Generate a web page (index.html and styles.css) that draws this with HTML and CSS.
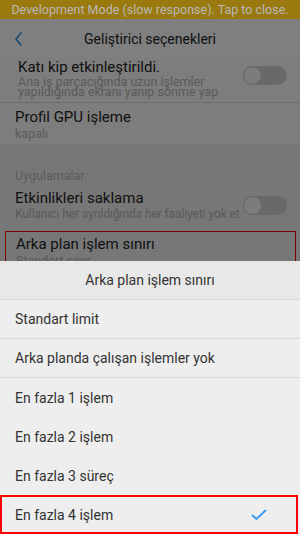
FILE: index.html
```html
<!doctype html>
<html>
<head>
<meta charset="utf-8">
<link rel="stylesheet" href="styles.css">
<title>Geliştirici seçenekleri</title>
</head>
<body>
<div class="devbar">Development Mode (slow response). Tap to close.</div>

<div class="screen">
    <header class="appbar">
        <svg class="back" width="10" height="16" viewBox="0 0 10 16">
            <path d="M7.5 1.5 L2 8 L7.5 14.5" fill="none" stroke="#2f93e6" stroke-width="1.6"/>
        </svg>
        <h1>Geliştirici seçenekleri</h1>
    </header>

    <div class="list">
        <div class="row row-first">
            <div class="text">
                <div class="title">Katı kip etkinleştirildi.</div>
                <div class="sub sub-tight">Ana iş parçacığında uzun işlemler<br>yapıldığında ekranı yanıp sönme yap</div>
            </div>
            <span class="toggle"></span>
        </div>
        <div class="row row-gpu">
            <div class="text">
                <div class="title">Profil GPU işleme</div>
                <div class="sub">kapalı</div>
            </div>
        </div>
    </div>

    <div class="group">
        <div class="group-label">Uygulamalar</div>
        <div class="row row-plain">
            <div class="text">
                <div class="title">Etkinlikleri saklama</div>
                <div class="sub">Kullanıcı her ayrıldığında her faaliyeti yok et</div>
            </div>
            <span class="toggle"></span>
        </div>
        <div class="row row-marked">
            <div class="text">
                <div class="title">Arka plan işlem sınırı</div>
                <div class="sub">Standart sınır</div>
            </div>
        </div>
    </div>

    <div class="scrim"></div>

    <div class="sheet">
        <div class="sheet-title">Arka plan işlem sınırı</div>
        <div class="option line">Standart limit</div>
        <div class="option line">Arka planda çalışan işlemler yok</div>
        <div class="option">En fazla 1 işlem</div>
        <div class="option">En fazla 2 işlem</div>
        <div class="option">En fazla 3 süreç</div>
        <div class="option selected">
            En fazla 4 işlem
            <svg class="check" width="18" height="13" viewBox="0 0 18 13">
                <path d="M2 7 L6.5 11 L16 2" fill="none" stroke="#3a9cf2" stroke-width="2"/>
            </svg>
        </div>
    </div>
</div>
</body>
</html>
```

FILE: styles.css
```css
body {
    margin: 0;
    width: 300px;
    height: 534px;
    overflow: hidden;
    font-family: Roboto, "Noto Sans", sans-serif;
    color: #222;
    background: #f6f6f6;
}
.devbar {
    height: 19px;
    line-height: 19px;
    background: #9a790e;
    color: #b8b8b8;
    font-size: 12.5px;
    text-align: center;
    white-space: nowrap;
    overflow: hidden;
}
.screen {
    position: relative;
    height: 515px;
    overflow: hidden;
}
.appbar {
    height: 39px;
    display: flex;
    align-items: center;
    justify-content: center;
    position: relative;
    background: #fefefe;
}
.appbar h1 {
    margin: 0;
    font-size: 14px;
    font-weight: 400;
    color: #222;
}
.back {
    position: absolute;
    left: 14px;
    top: 12px;
}
.list {
    background: #fbfbfb;
}
.row {
    display: flex;
    align-items: center;
    padding: 0 13px 0 15px;
}
.row .text {
    flex: 1;
    min-width: 0;
}
.title {
    font-size: 15px;
    line-height: 18px;
    color: #242424;
}
.sub {
    font-size: 12.5px;
    line-height: 15px;
    color: #b4b4b4;
    white-space: nowrap;
}
.row-first {
    height: 44px;
    align-items: flex-start;
    border-bottom: 1px solid #d8d8d8;
}
.row-first .text {
    padding-left: 3px;
}
.row-first .sub-tight {
    line-height: 10px;
    margin-top: 1px;
}
.row-first .toggle {
    margin-top: 8px;
}
.row-gpu {
    height: 40px;
    padding-top: 1px;
}
.group {
    background: #eeeeee;
    padding-top: 24px;
}
.group-label {
    font-size: 12.5px;
    line-height: 16px;
    color: #b8b8b8;
    padding: 0 15px 3px;
}
.row-plain {
    height: 36px;
}
.row-plain .sub {
    font-size: 12px;
    letter-spacing: -0.1px;
}
.row-marked {
    margin: 8px 4px 0 5px;
    padding: 3px 10px 0 10px;
    height: 40px;
    align-items: flex-start;
    border: 1px solid #ff0000;
}
.toggle {
    position: relative;
    flex: none;
    width: 44px;
    height: 19px;
    border-radius: 10px;
    background: #d3d3d3;
    margin-left: 4px;
}
.toggle::before {
    content: "";
    position: absolute;
    left: 0;
    top: 0;
    width: 17px;
    height: 17px;
    border-radius: 50%;
    background: #f8f8f8;
    border: 1px solid #c9c9c9;
}
.scrim {
    position: absolute;
    inset: 0;
    background: rgba(0, 0, 0, 0.5);
}
.sheet {
    position: absolute;
    left: 0;
    right: 0;
    bottom: 0;
    background: #eeeeee;
    color: #333;
}
.sheet-title {
    height: 38px;
    line-height: 38px;
    text-align: center;
    font-size: 14px;
    background: #e8e8e8;
    border-bottom: 1px solid #d6d6d6;
}
.option {
    display: flex;
    align-items: center;
    justify-content: space-between;
    height: 39px;
    padding: 0 30px 0 15px;
    font-size: 14px;
}
.option.line {
    height: 38px;
    border-bottom: 1px solid #d9d9d9;
}
.option.selected {
    height: 35px;
    margin-right: 2px;
    padding: 0 28px 0 13px;
    border: 2px solid #ff0000;
}
```
